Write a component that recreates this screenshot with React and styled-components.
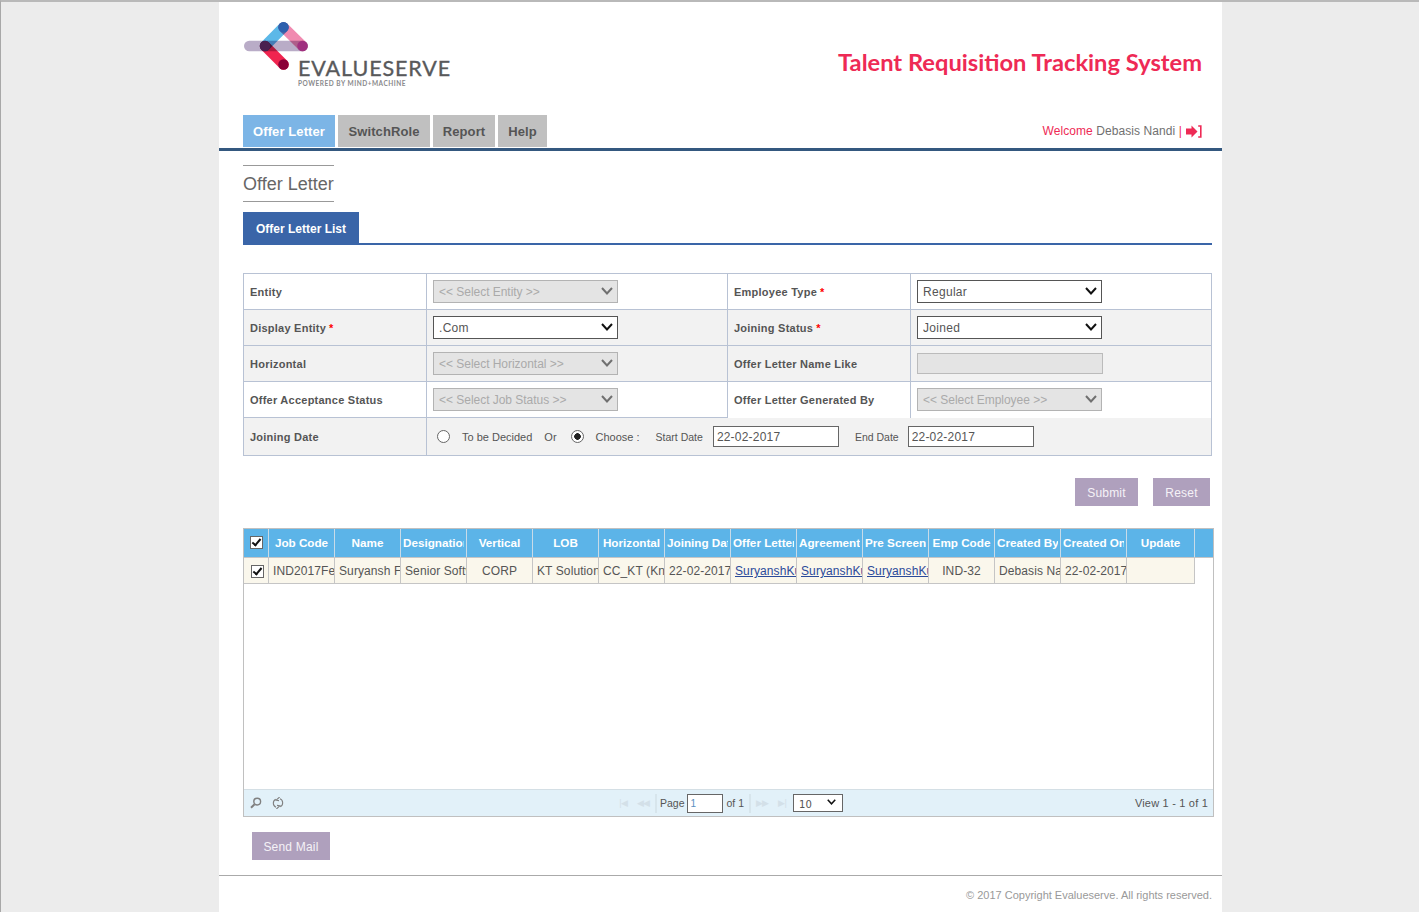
import React from 'react';
import styled, { createGlobalStyle } from 'styled-components';

const GlobalStyle = createGlobalStyle`
  html, body { margin: 0; padding: 0; background: #ececec; }
  body { font-family: "Liberation Sans", Arial, sans-serif; font-size: 12px; color: #555; }
`;

const Screen = styled.div`
  min-height: 912px;
  box-sizing: border-box;
  border-top: 2px solid #b9b9b9;
  border-left: 1px solid #a8a8a8;
`;

const Page = styled.div`
  width: 1003px;
  height: 910px;
  margin-left: 218px;
  background: #fff;
  overflow: hidden;
`;

const Header = styled.header`
  height: 113px;
  box-sizing: border-box;
  padding: 20px 20px 0 25px;
  display: flex;
  justify-content: space-between;
`;

const Logo = styled.div`
  width: 210px;
  display: flex;
  flex-direction: column;
  color: #58595b;
`;

const LogoMark = styled.svg`
  width: 66px;
  height: 52px;
  display: block;
  isolation: isolate;
`;

const LogoArm = styled.path`
  fill: none;
  stroke-width: 10.5;
  stroke-linecap: round;
  mix-blend-mode: multiply;
`;

const LogoName = styled.div`
  font-family: Lato, sans-serif;
  font-size: 21.5px;
  line-height: 20px;
  letter-spacing: 0.9px;
  -webkit-text-stroke: 0.35px #58595b;
  margin: -16px 0 0 54px;
  white-space: nowrap;
`;

const LogoTag = styled.div`
  font-family: Lato, sans-serif;
  font-weight: 700;
  font-size: 6.5px;
  line-height: 9px;
  letter-spacing: 0.52px;
  margin: 1px 0 0 54px;
  color: #8a8a8c;
  white-space: nowrap;
`;

const Title = styled.h1`
  margin: 25px 0 0;
  font-family: Lato, sans-serif;
  font-weight: 700;
  font-size: 23.7px;
  line-height: 30px;
  color: #ee2a55;
`;

const NavBar = styled.nav`
  height: 33px;
  padding: 0 20px 0 24px;
  display: flex;
  gap: 3px;
  border-bottom: 3px solid #34587f;
`;

const NavTab = styled.a`
  height: 32px;
  width: ${p => p.$width}px;
  justify-content: center;
  display: flex;
  align-items: center;
  font-size: 13px;
  letter-spacing: 0.1px;
  font-weight: 700;
  background: ${p => (p.$active ? '#7cb5e6' : '#c0c0c0')};
  color: ${p => (p.$active ? '#fff' : '#555')};
`;

const Welcome = styled.div`
  margin-left: auto;
  height: 32px;
  display: flex;
  align-items: center;
  gap: 4px;
  font-size: 12px;
  letter-spacing: 0.08px;
  color: #ee2a55;
`;

const UserName = styled.span`
  color: #707070;
`;

const Content = styled.main`
  padding: 14px 10px 0 24px;
`;

const PageTitle = styled.h2`
  width: fit-content;
  margin: 0;
  height: 35px;
  border-top: 1px solid #999;
  border-bottom: 1px solid #999;
  font-size: 18px;
  font-weight: 400;
  line-height: 37px;
  color: #666;
`;

const TabBar = styled.div`
  margin-top: 10px;
  border-bottom: 2px solid #3a65a8;
  display: flex;
`;

const Tab = styled.div`
  height: 31px;
  box-sizing: border-box;
  padding: 2px 13px 0;
  display: flex;
  align-items: center;
  background: #3a65a8;
  color: #fff;
  font-size: 12px;
  font-weight: 700;
`;

const FilterGrid = styled.div`
  margin-top: 28px;
  display: grid;
  grid-template-columns: 183px 301px 183px 300px;
  grid-template-rows: repeat(4, 36px) 37px;
  border: 1px solid #b8c2d4;
`;

const FilterCell = styled.div`
  display: flex;
  align-items: center;
  box-sizing: border-box;
  padding-left: 6px;
  padding-bottom: ${p => (p.$open ? 1 : 0)}px;
  background: ${p => (p.$shade ? '#f2f2f2' : '#fff')};
  border-bottom: ${p => (p.$open ? '0' : '1px solid #b8c2d4')};
  border-right: ${p => (p.$last ? '0' : '1px solid #b8c2d4')};
`;

const Label = styled(FilterCell)`
  font-size: 11px;
  font-weight: 700;
  letter-spacing: 0.24px;
  color: #555;
`;

const DateLabel = styled(Label)`
  padding-bottom: 0;
  border-bottom: 0;
`;

const DateCell = styled(FilterCell)`
  grid-column: span 3;
  border: 0;
  padding-left: 10px;
  font-size: 11px;
`;

const Req = styled.span`
  color: #f00;
  margin-left: 3px;
`;

const SelectWrap = styled.div`
  position: relative;
  width: 185px;
  height: 23px;
`;

const Select = styled.select`
  appearance: none;
  display: block;
  width: 100%;
  height: 100%;
  box-sizing: border-box;
  font-family: "Liberation Sans", Arial, sans-serif;
  font-size: 12px;
  letter-spacing: 0.3px;
  color: #555;
  background: #fff;
  border: 1px solid #555;
  border-radius: 0;
  padding: 0 0 0 5px;
  &:disabled {
    background: #e4e4e4;
    border-color: #b3b3b3;
    color: #aaa;
    opacity: 1;
    letter-spacing: -0.03px;
  }
`;

const Chevron = styled.svg`
  position: absolute;
  right: 5px;
  top: 7px;
  width: 12px;
  height: 8px;
  pointer-events: none;
  fill: none;
  stroke: ${p => (p.$off ? '#707070' : '#111')};
  stroke-width: 2;
`;

const TextBox = styled.input`
  width: 186px;
  height: 21px;
  box-sizing: border-box;
  background: #e4e4e4;
  border: 1px solid #bbb;
  padding: 0;
`;

const Radio = styled.input.attrs({ type: 'radio' })`
  appearance: none;
  margin: 0 12px 0 0;
  width: 13px;
  height: 13px;
  box-sizing: border-box;
  border: 1px solid #666;
  border-radius: 50%;
  background: #fff;
  &:checked {
    background: radial-gradient(circle, #222 0 3px, #fff 3.6px);
  }
`;

const Small = styled.span`
  margin-right: ${p => p.$gap || 13}px;
  font-size: ${p => p.$size || 11}px;
`;

const DateInput = styled.input`
  width: 126px;
  height: 21px;
  box-sizing: border-box;
  margin-right: 16px;
  padding: 0 3px;
  border: 1px solid #666;
  font-family: "Liberation Sans", Arial, sans-serif;
  font-size: 12px;
  letter-spacing: 0.2px;
  color: #555;
`;

const Actions = styled.div`
  margin-top: 22px;
  height: 28px;
  padding-right: 2px;
  display: flex;
  justify-content: flex-end;
  gap: 15px;
`;

const PurpleButton = styled.button`
  height: 28px;
  width: ${p => p.$width}px;
  padding: 2px 0 0;
  border: 0;
  background: #afa0bd;
  color: #f5f2f7;
  font-family: "Liberation Sans", Arial, sans-serif;
  font-size: 12px;
  letter-spacing: 0.2px;
`;

const Grid = styled.section`
  margin-top: 22px;
  width: 971px;
  height: 289px;
  box-sizing: border-box;
  border: 1px solid #c0c0c0;
  display: flex;
  flex-direction: column;
`;

const GridHead = styled.div`
  background: #5cb4e8;
  border-bottom: 1px solid #c5c5c5;
`;

const GridBody = styled.div`
  flex: 1;
`;

const Table = styled.table`
  table-layout: fixed;
  width: 951px;
  border-collapse: separate;
  border-spacing: 0;
`;

const HeadCell = styled.th`
  height: 28px;
  box-sizing: border-box;
  padding: 0 ${p => (p.$tight ? 0 : 2)}px 2px;
  border-right: 1px solid #c8dbe8;
`;

const HeadLabel = styled.div`
  text-align: center;
  font-size: 11.7px;
  font-weight: 700;
  color: #fff;
  white-space: nowrap;
  overflow: hidden;
`;

const BodyCell = styled.td`
  height: 26px;
  box-sizing: border-box;
  padding: 1px 0 0 ${p => (p.$center ? 0 : 4)}px;
  background: #faf7ec;
  font-size: 12px;
  letter-spacing: 0.1px;
  color: #555;
  text-align: ${p => (p.$center ? 'center' : 'left')};
  white-space: nowrap;
  overflow: hidden;
  border-right: 1px solid #c5c5c5;
  border-bottom: 1px solid #c5c5c5;
`;

const FileLink = styled.a`
  color: #2b4a9a;
  text-decoration: underline;
`;

const Check = styled.input.attrs({ type: 'checkbox' })`
  appearance: none;
  display: flex;
  align-items: center;
  justify-content: center;
  margin: 0 0 0 ${p => p.$left || 0}px;
  width: 13px;
  height: 13px;
  box-sizing: border-box;
  border: 1px solid #666;
  background: #fff;
  &:checked::after {
    content: "";
    width: 3px;
    height: 7px;
    margin-top: -2px;
    border: solid #111;
    border-width: 0 2px 2px 0;
    transform: rotate(40deg);
  }
`;

const Pager = styled.div`
  height: 26px;
  display: grid;
  grid-template-columns: 369px auto 1fr;
  align-items: center;
  background: #e2f1f9;
  border-top: 1px solid #d4dfe5;
  font-size: 10.5px;
  color: #555;
`;

const PagerLeft = styled.div`
  padding-left: 6px;
  display: flex;
  gap: 10px;
  color: #808080;
`;

const PagerCenter = styled.div`
  display: flex;
  align-items: center;
`;

const PagerRight = styled.div`
  text-align: right;
  padding-right: 5px;
  font-size: 11px;
  letter-spacing: 0.2px;
`;

const PagerSep = styled.span`
  width: 2px;
  height: 19px;
  margin: 0 ${p => p.$right}px 0 ${p => p.$left}px;
  background: #d7e5ec;
`;

const PageBox = styled.input`
  width: 36px;
  height: 19px;
  box-sizing: border-box;
  margin: 0 4px 0 2px;
  padding: 0 3px;
  border: 1px solid #666;
  font-family: "Liberation Sans", Arial, sans-serif;
  font-size: 10px;
  color: #5a8fc0;
`;

const PageSizeWrap = styled.div`
  position: relative;
  width: 50px;
  height: 18px;
  margin-left: 1px;
`;

const PageSize = styled.select`
  appearance: none;
  display: block;
  width: 100%;
  height: 100%;
  box-sizing: border-box;
  padding: 2px 0 0 5px;
  border: 1px solid #666;
  border-radius: 0;
  background: #fff;
  font-family: "DejaVu Sans", sans-serif;
  font-size: 10px;
  color: #555;
`;

const PageSizeChevron = styled(Chevron)`
  top: 5px;
  right: 7px;
  width: 9px;
  height: 6px;
`;

const MailRow = styled.div`
  margin: 15px 0 0 9px;
`;

const Footer = styled.footer`
  margin-top: 15px;
  height: 35px;
  border-top: 1px solid #aaa;
  padding-right: 10px;
  text-align: right;
  font-size: 11px;
  line-height: 39px;
  color: #999;
`;

const EvalueserveMark = () => (
  <LogoMark viewBox="0 0 66 52">
    <LogoArm d="M5.25 24H58.75" stroke="#b9acc7" />
    <LogoArm d="M21 24L39.5 5.25" stroke="#5cb8e8" />
    <LogoArm d="M39.5 5.25L58.5 24" stroke="#f08ab0" />
    <LogoArm d="M21 24L39.5 42.5" stroke="#f0244f" />
    <circle cx="39.5" cy="5.25" r="5.25" fill="#2e60ad" />
    <circle cx="21" cy="24" r="5.25" fill="#4a2050" />
    <circle cx="58.5" cy="24" r="5.25" fill="#a0307f" />
    <circle cx="39.5" cy="42.5" r="5.25" fill="#8b0038" />
  </LogoMark>
);

const SignOut = () => (
  <svg width="16" height="13" viewBox="0 0 16 13">
    <path d="M0 3.5H5.5V0.5L11.5 6.5 5.5 12.5V9.5H0Z" fill="#ee2a55" />
    <path d="M12.2 1H14.8V12H12.2" fill="none" stroke="#ee2a55" strokeWidth="1.6" />
  </svg>
);

const SearchIcon = () => (
  <svg width="12" height="12" viewBox="0 0 12 12" fill="none" stroke="currentColor">
    <circle cx="7.2" cy="4.6" r="3.4" strokeWidth="1.4" />
    <path d="M4.6 7.2L1 10.8" strokeWidth="2" />
  </svg>
);

const ReloadIcon = () => (
  <svg width="12" height="12" viewBox="0 0 12 12" fill="none" stroke="currentColor" strokeWidth="1.1">
    <path d="M3.8 2.2A4.4 4.4 0 0 0 4 10.2" />
    <path d="M8.2 9.8A4.4 4.4 0 0 0 8 1.8" />
    <path d="M7.6 0L4.2 3.2 7 3.6M4.4 12L7.8 8.8 5 8.4" />
  </svg>
);

const NavIcon = styled.span`
  width: 20px;
  text-align: center;
  font-size: 9px;
  color: #d3e0e8;
  letter-spacing: -1px;
`;

const columns = [
  ['Job Code', 'IND2017Feb-0032'],
  ['Name', 'Suryansh F'],
  ['Designation', 'Senior Software Engineer'],
  ['Vertical', 'CORP', true],
  ['LOB', 'KT Solutions'],
  ['Horizontal', 'CC_KT (Knowledge)'],
  ['Joining Date', '22-02-2017'],
  ['Offer Letter', 'SuryanshKumar.pdf', false, true],
  ['Agreement', 'SuryanshKumar.pdf', false, true],
  ['Pre Screening', 'SuryanshKumar.pdf', false, true],
  ['Emp Code', 'IND-32', true],
  ['Created By', 'Debasis Nandi'],
  ['Created On', '22-02-2017'],
];

const ColSizes = () => (
  <colgroup>
    <col style={{ width: 25 }} />
    {columns.map(c => <col key={c[0]} style={{ width: 66 }} />)}
    <col style={{ width: 68 }} />
  </colgroup>
);

const filterRows = [
  { left: 'Entity', leftValue: '<< Select Entity >>', leftOff: true, right: 'Employee Type', rightReq: true, rightValue: 'Regular' },
  { left: 'Display Entity', leftReq: true, leftValue: '.Com', right: 'Joining Status', rightReq: true, rightValue: 'Joined', shade: true },
  { left: 'Horizontal', leftValue: '<< Select Horizontal >>', leftOff: true, right: 'Offer Letter Name Like', shade: true },
  { left: 'Offer Acceptance Status', leftValue: '<< Select Job Status >>', leftOff: true, right: 'Offer Letter Generated By', rightValue: '<< Select Employee >>', rightOff: true, open: true },
];

const Choice = ({ value, off }) => (
  <SelectWrap>
    <Select disabled={off} defaultValue={value}>
      <option>{value}</option>
    </Select>
    <Chevron $off={off} viewBox="0 0 12 8"><path d="M1 1L6 6.5 11 1" /></Chevron>
  </SelectWrap>
);

const App = () => (
  <Screen>
    <GlobalStyle />
    <Page>
      <Header>
        <Logo>
          <EvalueserveMark />
          <LogoName>EVALUESERVE</LogoName>
          <LogoTag>POWERED BY MIND+MACHINE</LogoTag>
        </Logo>
        <Title>Talent Requisition Tracking System</Title>
      </Header>

      <NavBar>
        <NavTab $active $width={92}>Offer Letter</NavTab>
        <NavTab $width={92}>SwitchRole</NavTab>
        <NavTab $width={62}>Report</NavTab>
        <NavTab $width={49}>Help</NavTab>
        <Welcome>
          <span>Welcome <UserName>Debasis Nandi</UserName> |</span>
          <SignOut />
        </Welcome>
      </NavBar>

      <Content>
        <PageTitle>Offer Letter</PageTitle>
        <TabBar><Tab>Offer Letter List</Tab></TabBar>

        <FilterGrid>
          {filterRows.map(r => (
            <React.Fragment key={r.left}>
              <Label $shade={r.shade}>{r.left}{r.leftReq && <Req>*</Req>}</Label>
              <FilterCell $shade={r.shade}><Choice value={r.leftValue} off={r.leftOff} /></FilterCell>
              <Label $shade={r.shade} $open={r.open}>{r.right}{r.rightReq && <Req>*</Req>}</Label>
              <FilterCell $shade={r.shade} $open={r.open} $last>
                {r.rightValue ? <Choice value={r.rightValue} off={r.rightOff} /> : <TextBox disabled />}
              </FilterCell>
            </React.Fragment>
          ))}
          <DateLabel $shade>Joining Date</DateLabel>
          <DateCell $shade>
            <Radio name="joining" />
            <Small $gap={12}>To be Decided</Small>
            <Small $gap={14}>Or</Small>
            <Radio name="joining" defaultChecked />
            <Small $gap={16}>Choose :</Small>
            <Small $gap={10} $size={10.5}>Start Date</Small>
            <DateInput defaultValue="22-02-2017" />
            <Small $gap={9} $size={10.5}>End Date</Small>
            <DateInput defaultValue="22-02-2017" />
          </DateCell>
        </FilterGrid>

        <Actions>
          <PurpleButton $width={63}>Submit</PurpleButton>
          <PurpleButton $width={57}>Reset</PurpleButton>
        </Actions>

        <Grid>
          <GridHead>
            <Table>
              <ColSizes />
              <thead>
                <tr>
                  <HeadCell $tight><Check $left={6} defaultChecked /></HeadCell>
                  {columns.map(c => <HeadCell key={c[0]}><HeadLabel>{c[0]}</HeadLabel></HeadCell>)}
                  <HeadCell><HeadLabel>Update</HeadLabel></HeadCell>
                </tr>
              </thead>
            </Table>
          </GridHead>
          <GridBody>
            <Table>
              <ColSizes />
              <tbody>
                <tr>
                  <BodyCell><Check $left={3} defaultChecked /></BodyCell>
                  {columns.map(c => (
                    <BodyCell key={c[0]} $center={c[2]}>
                      {c[3] ? <FileLink href="#">{c[1]}</FileLink> : c[1]}
                    </BodyCell>
                  ))}
                  <BodyCell />
                </tr>
              </tbody>
            </Table>
          </GridBody>
          <Pager>
            <PagerLeft>
              <SearchIcon />
              <ReloadIcon />
            </PagerLeft>
            <PagerCenter>
              <NavIcon>|◀</NavIcon>
              <NavIcon>◀◀</NavIcon>
              <PagerSep $left={2} $right={3} />
              Page
              <PageBox defaultValue="1" />
              of 1
              <PagerSep $left={5} $right={1} />
              <NavIcon>▶▶</NavIcon>
              <NavIcon>▶|</NavIcon>
              <PageSizeWrap>
                <PageSize defaultValue="10"><option>10</option></PageSize>
                <PageSizeChevron viewBox="0 0 12 8"><path d="M1 1L6 6.5 11 1" /></PageSizeChevron>
              </PageSizeWrap>
            </PagerCenter>
            <PagerRight>View 1 - 1 of 1</PagerRight>
          </Pager>
        </Grid>

        <MailRow><PurpleButton $width={78}>Send Mail</PurpleButton></MailRow>
      </Content>

      <Footer>© 2017 Copyright Evalueserve. All rights reserved.</Footer>
    </Page>
  </Screen>
);

export default App;
